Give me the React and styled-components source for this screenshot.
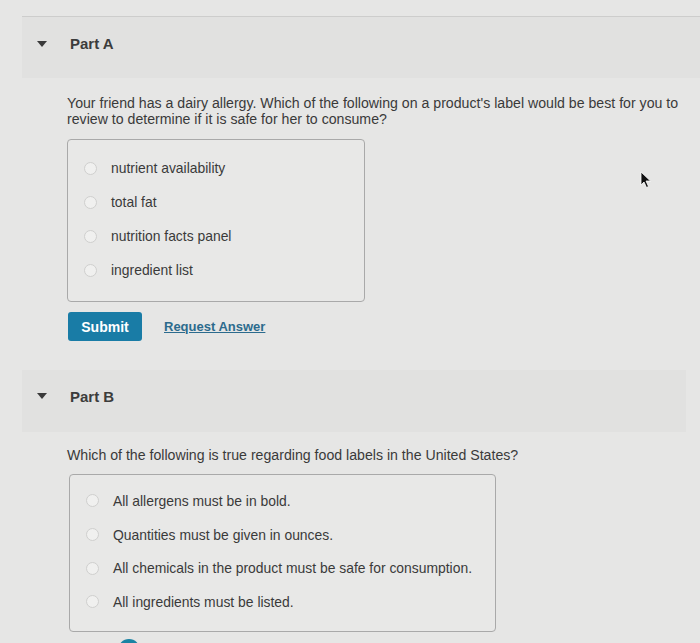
import React from 'react';
import styled, { createGlobalStyle } from 'styled-components';

const Global = createGlobalStyle`
  html, body { margin: 0; padding: 0; }
  body {
    background: #e6e6e5;
    font-family: "Liberation Sans", Arial, sans-serif;
    color: #3a3a3a;
    overflow: hidden;
    height: 643px;
  }
`;

const Page = styled.div`
  position: relative;
  padding: 16px 0 0 22px;
`;

const Section = styled.section`
  border-top: ${p => (p.$ruled ? '1px solid #cdcdcc' : 'none')};
`;

const Header = styled.div`
  display: flex;
  align-items: center;
  height: ${p => p.$h}px;
  padding: 0 0 ${p => p.$lift}px 15px;
  box-sizing: border-box;
  margin-right: ${p => p.$right}px;
  background: #e1e1e0;
  font-size: 15px;
  font-weight: bold;
  color: #3c3c3c;
`;

const Caret = styled.span`
  width: 0;
  height: 0;
  border-left: 5px solid transparent;
  border-right: 5px solid transparent;
  border-top: 6px solid #3a3a3a;
  margin-right: 23px;
`;

const Body = styled.div`
  padding: ${p => p.$top}px 0 0 45px;
`;

const Question = styled.p`
  margin: 0;
  font-size: 14.15px;
  line-height: 16px;
  width: 625px;
  color: #3a3a3a;
`;

const Choices = styled.div`
  width: ${p => p.$w}px;
  margin: ${p => p.$gap}px 0 0 ${p => p.$left}px;
  padding: ${p => p.$pt}px 16px ${p => p.$pb}px 16px;
  border: 1px solid #a9a9a9;
  border-radius: 4px;
  background: #e8e8e7;
  box-sizing: border-box;
`;

const Option = styled.label`
  display: flex;
  align-items: center;
  height: ${p => p.$h}px;
  font-size: 13.9px;
  color: #3a3a3a;
`;

const Radio = styled.span`
  width: 11px;
  height: 11px;
  border-radius: 50%;
  border: 1px solid #cfcfce;
  background: #f0f0ef;
  margin-right: ${p => p.$gap}px;
  flex: none;
`;

const Actions = styled.div`
  display: flex;
  align-items: center;
  gap: 22px;
  margin: 10px 0 0 1px;
`;

const SubmitButton = styled.button`
  width: 74px;
  height: 29px;
  border: none;
  border-radius: 3px;
  background: #197ca6;
  color: #fff;
  font-family: inherit;
  font-size: 14px;
  font-weight: bold;
  padding: 0;
`;

const RequestLink = styled.a`
  font-size: 13px;
  font-weight: bold;
  color: #2c6b8d;
  text-decoration: underline;
`;

const Spacer = styled.div`
  height: ${p => p.$h}px;
`;

const RoundButton = styled.div`
  width: 22px;
  height: 22px;
  border-radius: 50%;
  background: #1a83a3;
  margin: 7px 0 0 51px;
`;

const Pointer = styled.svg`
  position: absolute;
  left: 640px;
  top: 171px;
`;

const partA = ['nutrient availability', 'total fat', 'nutrition facts panel', 'ingredient list'];
const partB = [
  'All allergens must be in bold.',
  'Quantities must be given in ounces.',
  'All chemicals in the product must be safe for consumption.',
  'All ingredients must be listed.',
];

export default function App() {
  return (
    <>
      <Global />
      <Page>
        <Section $ruled>
          <Header $h={61} $lift={8} $right={0}>
            <Caret />
            Part A
          </Header>
          <Body $top={17}>
            <Question>
              Your friend has a dairy allergy. Which of the following on a product's label would be best for you to
              review to determine if it is safe for her to consume?
            </Question>
            <Choices $w={298} $gap={12} $left={0} $pt={11} $pb={14}>
              {partA.map(t => (
                <Option key={t} $h={34}>
                  <Radio $gap={14} />
                  {t}
                </Option>
              ))}
            </Choices>
            <Actions>
              <SubmitButton>Submit</SubmitButton>
              <RequestLink>Request Answer</RequestLink>
            </Actions>
          </Body>
        </Section>
        <Spacer $h={29} />
        <Section>
          <Header $h={62} $lift={10} $right={14}>
            <Caret />
            Part B
          </Header>
          <Body $top={15}>
            <Question>Which of the following is true regarding food labels in the United States?</Question>
            <Choices $w={427} $gap={11} $left={2} $pt={9} $pb={12}>
              {partB.map(t => (
                <Option key={t} $h={33.7}>
                  <Radio $gap={14} />
                  {t}
                </Option>
              ))}
            </Choices>
            <RoundButton />
          </Body>
        </Section>
        <Pointer width="12" height="18" viewBox="0 0 12 18">
          <path d="M1 1 L1 14 L4 11 L6.5 16.5 L8.5 15.5 L6 10 L10.5 10 Z" fill="#111" stroke="#fff" strokeWidth="0.8" />
        </Pointer>
      </Page>
    </>
  );
}
